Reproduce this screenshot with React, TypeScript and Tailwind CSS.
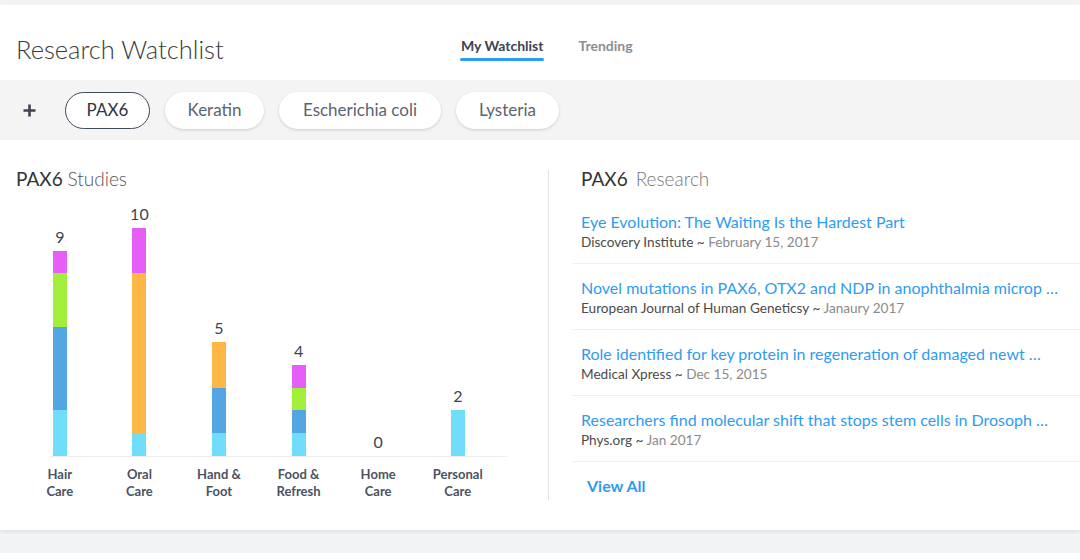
import React from "react";

type Segment = { color: string; h: number };

type Category = {
  label: [string, string];
  total: number;
  segments: Segment[]; // top to bottom
};

const MAGENTA = "bg-[#e65ef8]";
const GREEN = "bg-[#a1ef3b]";
const BLUE = "bg-[#53a6e2]";
const CYAN = "bg-[#70ddfb]";
const ORANGE = "bg-[#fdb747]";

const categories: Category[] = [
  {
    label: ["Hair", "Care"],
    total: 9,
    segments: [
      { color: MAGENTA, h: 22 },
      { color: GREEN, h: 54 },
      { color: BLUE, h: 83 },
      { color: CYAN, h: 46 },
    ],
  },
  {
    label: ["Oral", "Care"],
    total: 10,
    segments: [
      { color: MAGENTA, h: 45 },
      { color: ORANGE, h: 160 },
      { color: CYAN, h: 23 },
    ],
  },
  {
    label: ["Hand &", "Foot"],
    total: 5,
    segments: [
      { color: ORANGE, h: 46 },
      { color: BLUE, h: 45 },
      { color: CYAN, h: 23 },
    ],
  },
  {
    label: ["Food &", "Refresh"],
    total: 4,
    segments: [
      { color: MAGENTA, h: 23 },
      { color: GREEN, h: 22 },
      { color: BLUE, h: 23 },
      { color: CYAN, h: 23 },
    ],
  },
  { label: ["Home", "Care"], total: 0, segments: [] },
  {
    label: ["Personal", "Care"],
    total: 2,
    segments: [{ color: CYAN, h: 46 }],
  },
];

const articles = [
  {
    title: "Eye Evolution: The Waiting Is the Hardest Part",
    source: "Discovery Institute",
    date: "February 15, 2017",
  },
  {
    title: "Novel mutations in PAX6, OTX2 and NDP in anophthalmia microp …",
    source: "European Journal of Human Geneticsy",
    date: "Janaury 2017",
  },
  {
    title: "Role identified for key protein in regeneration of damaged newt …",
    source: "Medical Xpress",
    date: "Dec 15, 2015",
  },
  {
    title: "Researchers find molecular shift that stops stem cells in Drosoph …",
    source: "Phys.org",
    date: "Jan 2017",
  },
];

const chips = [
  { name: "PAX6", w: "w-[85px]", active: true },
  { name: "Keratin", w: "w-[99px]", active: false },
  { name: "Escherichia coli", w: "w-[162px]", active: false },
  { name: "Lysteria", w: "w-[103px]", active: false },
];

const App: React.FC = () => {
  return (
    <div className="w-[1080px] h-[560px] bg-white font-['Lato','Open_Sans',sans-serif]">
      <div className="h-[553px] bg-[#f2f3f5] pt-[5px]">
        <div className="h-[525px] bg-white shadow-[0_2px_4px_rgba(0,0,0,0.08)]">
          {/* header */}
          <div className="flex items-start h-[75px]">
            <h1 className="pl-4 w-[460px] pt-[27px] text-[25.5px] leading-[34px] font-light text-[#3a3a3a]">
              Research Watchlist
            </h1>
            <div className="flex items-start gap-[34px] pt-[32px]">
              <div className="flex flex-col items-center">
                <span className="text-[14px] leading-[18px] font-bold text-[#3d4452] px-[1px]">
                  My Watchlist
                </span>
                <span className="mt-[3px] h-[3px] w-[84px] rounded-full bg-[#2a9cf2]" />
              </div>
              <span className="text-[14px] leading-[18px] font-bold text-[#8a8d93]">
                Trending
              </span>
            </div>
          </div>

          {/* chip bar */}
          <div className="h-[60px] bg-[#f4f4f5] flex items-center pl-[22px]">
            <svg width="15" height="15" viewBox="0 0 15 15" className="mr-[28px]">
              <path
                d="M7.5 1.5v12M1.5 7.5h12"
                stroke="#3d4452"
                strokeWidth="2.6"
                strokeLinecap="butt"
              />
            </svg>
            <div className="flex items-center gap-[15px]">
              {chips.map((c) =>
                c.active ? (
                  <div
                    key={c.name}
                    className={`${c.w} h-[37px] rounded-full border-[1.5px] border-[#414a5a] bg-white flex items-center justify-center text-[17px] text-[#2f3440]`}
                  >
                    {c.name}
                  </div>
                ) : (
                  <div
                    key={c.name}
                    className={`${c.w} h-[37px] rounded-full bg-white shadow-[0_1px_3px_rgba(0,0,0,0.16)] flex items-center justify-center text-[17px] text-[#5c6372]`}
                  >
                    {c.name}
                  </div>
                )
              )}
            </div>
          </div>

          {/* body */}
          <div className="flex items-start">
            {/* chart */}
            <div className="w-[548px] pl-4 pt-[25px]">
              <h2 className="text-[19px] leading-[28px] text-[#333]">
                <span className="font-normal">PAX6</span>{" "}
                <span className="font-light text-[#555]">Studies</span>
              </h2>
              <div className="h-[263px] flex items-end pl-[4px]">
                {categories.map((cat) => (
                  <div key={cat.label.join(" ")} className="w-[79.6px] flex flex-col items-center">
                    <span className="text-[16px] leading-[20px] text-[#3d4452] mb-[4px]">
                      {cat.total}
                    </span>
                    <div className="w-[14px] flex flex-col">
                      {cat.segments.map((s, i) => (
                        <div key={i} className={s.color} style={{ height: s.h }} />
                      ))}
                    </div>
                  </div>
                ))}
              </div>
              <div className="ml-[34px] w-[457px] h-px bg-[#eeeeee]" />
              <div className="flex pl-[4px] pt-[9px]">
                {categories.map((cat) => (
                  <div
                    key={cat.label.join("-")}
                    className="w-[79.6px] flex flex-col items-center text-[13px] leading-[17px] font-bold text-[#4b5262]"
                  >
                    <span>{cat.label[0]}</span>
                    <span>{cat.label[1]}</span>
                  </div>
                ))}
              </div>
            </div>

            {/* divider */}
            <div className="mt-[30px] w-px h-[330px] bg-[#e2e2e2]" />

            {/* research list */}
            <div className="flex-1 pt-[25px] pl-[24px]">
              <h2 className="pl-[8px] text-[19px] leading-[28px]">
                <span className="font-normal text-[#333]">PAX6</span>
                <span className="ml-[8px] font-light text-[#777]">Research</span>
              </h2>
              <div className="mt-[5px]">
                {articles.map((a) => (
                  <div
                    key={a.title}
                    className="pl-[8px] pt-[14px] pb-[12px] border-b border-[#efefef]"
                  >
                    <div className="text-[16px] leading-[20px] text-[#2f9bef] whitespace-nowrap overflow-hidden">
                      {a.title}
                    </div>
                    <div className="mt-[1px] text-[13.6px] leading-[18px]">
                      <span className="text-[#4a4a4a]">{a.source} ~</span>{" "}
                      <span className="text-[#8a8a8a]">{a.date}</span>
                    </div>
                  </div>
                ))}
              </div>
              <div className="pl-[14px] pt-[14px] text-[16px] leading-[20px] font-bold text-[#2f9bef]">
                View All
              </div>
            </div>
          </div>
        </div>
      </div>
    </div>
  );
};

export default App;
